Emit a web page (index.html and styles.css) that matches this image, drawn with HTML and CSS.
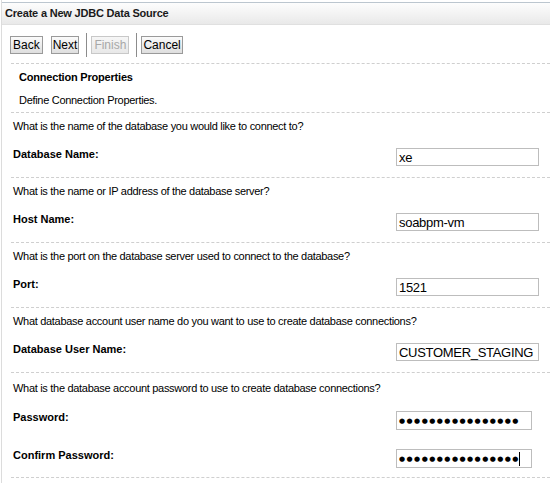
FILE: index.html
```html
<!DOCTYPE html>
<html>
<head>
<meta charset="utf-8">
<link rel="stylesheet" href="styles.css">
</head>
<body>
<div class="page">
  <div class="header">Create a New JDBC Data Source</div>
  <div class="toolbar">
    <button class="btn btn-back">Back</button>
    <button class="btn btn-next">Next</button>
    <span class="sep"></span>
    <button class="btn btn-disabled" disabled>Finish</button>
    <span class="sep sep2"></span>
    <button class="btn btn-cancel">Cancel</button>
  </div>
  <div class="intro">
    <div class="intro-title">Connection Properties</div>
    <div class="intro-desc">Define Connection Properties.</div>
  </div>
  <div class="section">
    <div class="question">What is the name of the database you would like to connect to?</div>
    <div class="field"><span class="label">Database Name:</span><input class="input" type="text" value="xe"></div>
  </div>
  <div class="section">
    <div class="question">What is the name or IP address of the database server?</div>
    <div class="field"><span class="label">Host Name:</span><input class="input" type="text" value="soabpm-vm"></div>
  </div>
  <div class="section">
    <div class="question">What is the port on the database server used to connect to the database?</div>
    <div class="field"><span class="label">Port:</span><input class="input" type="text" value="1521"></div>
  </div>
  <div class="section">
    <div class="question">What database account user name do you want to use to create database connections?</div>
    <div class="field"><span class="label">Database User Name:</span><input class="input" type="text" value="CUSTOMER_STAGING"></div>
  </div>
  <div class="section section-pw">
    <div class="question">What is the database account password to use to create database connections?</div>
    <div class="field field-pw"><span class="label">Password:</span><div class="input input-pw">&#9679;&#9679;&#9679;&#9679;&#9679;&#9679;&#9679;&#9679;&#9679;&#9679;&#9679;&#9679;&#9679;&#9679;&#9679;&#9679;</div></div>
    <div class="field field-confirm"><span class="label">Confirm Password:</span><div class="input input-pw">&#9679;&#9679;&#9679;&#9679;&#9679;&#9679;&#9679;&#9679;&#9679;&#9679;&#9679;&#9679;&#9679;&#9679;&#9679;&#9679;<span class="caret"></span></div></div>
  </div>
  <div class="end"></div>
</div>
</body>
</html>
```

FILE: styles.css
```css
html, body {
  margin: 0;
  padding: 0;
  background: #fff;
}
.page {
  padding-top: 2px;
  border-left: 1px solid #dcdcdc;
  margin-left: 1px;
  min-height: 481px;
  font-family: "Liberation Sans", Arial, sans-serif;
  font-size: 11px;
  letter-spacing: -0.3px;
  color: #000;
}
.header {
  height: 21px;
  line-height: 20px;
  border-top: 1px solid #bcc6cf;
  border-bottom: 1px solid #e0e0e0;
  background: linear-gradient(#fdfdfd, #e9e9e9);
  font-size: 11px;
  font-weight: bold;
  letter-spacing: -0.2px;
  padding-left: 3px;
  color: #1a1a1a;
}
.toolbar {
  display: flex;
  align-items: center;
  height: 24px;
  padding: 8px 0 0 8px;
  margin-bottom: 6px;
}
.btn {
  font-family: "Liberation Sans", Arial, sans-serif;
  font-size: 12px;
  letter-spacing: 0;
  height: 18px;
  padding: 0 1px;
  border: 1px solid #9a9a9a;
  border-radius: 0;
  background: linear-gradient(#fbfbfb, #dedede);
  color: #000;
  line-height: 16px;
  margin: 0;
}
.btn-back { padding: 0 2px; }
.btn-next { margin-left: 8px; }
.btn-disabled {
  color: #a8a8a8;
  border-color: #c8c8c8;
  background: linear-gradient(#f6f6f6, #e8e8e8);
  margin-left: 4px;
  padding: 0 2px;
}
.sep {
  display: block;
  width: 1px;
  height: 24px;
  background: #8c8c8c;
  margin-left: 7px;
}
.sep2 { margin-left: 7px; }
.btn-cancel { margin-left: 4px; padding: 0 1px; }
.intro {
  margin-left: 9px;
  border-top: 1px dashed #cfcfcf;
  padding: 6px 0 5px 8px;
}
.intro-title {
  font-size: 11px;
  font-weight: bold;
  letter-spacing: -0.2px;
  line-height: 14px;
}
.intro-desc {
  margin-top: 9px;
  line-height: 14px;
}
.section {
  margin-left: 9px;
  border-top: 1px dashed #cfcfcf;
  padding: 6px 0 11px 2px;
}
.question {
  line-height: 14px;
}
.field {
  display: grid;
  grid-template-columns: 383px 1fr;
  align-items: start;
  margin-top: 14px;
}
.label {
  font-size: 11px;
  font-weight: bold;
  letter-spacing: 0;
  line-height: 14px;
}
.input {
  box-sizing: border-box;
  width: 143px;
  height: 18px;
  margin: 1px 0 0 0;
  padding: 0 2px;
  border: 1px solid #bdbdbd;
  font-family: "Liberation Sans", Arial, sans-serif;
  font-size: 13px;
  letter-spacing: -0.3px;
  color: #000;
  background: #fff;
  outline: none;
}
.input-pw {
  width: 136px;
  height: 19px;
  display: flex;
  align-items: center;
  padding-left: 2px;
  font-family: "DejaVu Sans", sans-serif;
  font-size: 7px;
  letter-spacing: 1.45px;
  white-space: nowrap;
  overflow: hidden;
}
.caret {
  display: inline-block;
  width: 1px;
  height: 14px;
  background: #000;
  margin-left: -1px;
}
.section-pw {
  padding-top: 8px;
  padding-bottom: 9px;
}
.field-pw {
  margin-top: 15px;
}
.field-confirm {
  margin-top: 18px;
}
.end {
  margin-left: 9px;
  border-top: 1px dashed #cfcfcf;
}
```
